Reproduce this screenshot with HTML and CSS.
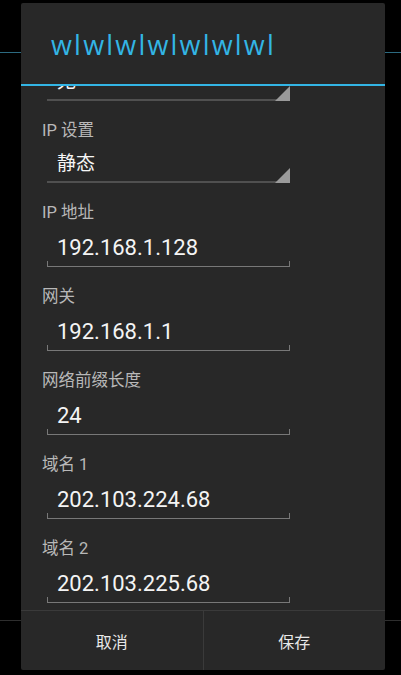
FILE: index.html
```html
<!DOCTYPE html>
<html lang="zh-CN">
<head>
    <meta charset="UTF-8">
    <meta name="viewport" content="width=device-width, initial-scale=1.0">
    <title>WLAN</title>
    <link rel="stylesheet" href="styles.css">
</head>
<body>

    <div class="dialog">
        <div class="dialog-title">wlwlwlwlwlwlwl</div>

        <div class="dialog-body">
            <div class="form">
                <div class="row">
                    <div class="label">代理设置</div>
                    <div class="spinner">无</div>
                </div>
                <div class="row">
                    <div class="label">IP 设置</div>
                    <div class="spinner">静态</div>
                </div>
                <div class="row">
                    <div class="label">IP 地址</div>
                    <div class="edit">192.168.1.128</div>
                </div>
                <div class="row">
                    <div class="label">网关</div>
                    <div class="edit">192.168.1.1</div>
                </div>
                <div class="row">
                    <div class="label">网络前缀长度</div>
                    <div class="edit">24</div>
                </div>
                <div class="row">
                    <div class="label">域名 1</div>
                    <div class="edit">202.103.224.68</div>
                </div>
                <div class="row">
                    <div class="label">域名 2</div>
                    <div class="edit">202.103.225.68</div>
                </div>
            </div>
        </div>

        <div class="dialog-buttons">
            <div class="btn">取消</div>
            <div class="btn">保存</div>
        </div>
    </div>

</body>
</html>
```

FILE: styles.css
```css
* {
    padding: 0;
    margin: 0;
    box-sizing: border-box;
}
body {
    height: 675px;
    overflow: hidden;
    font-family: Roboto, "Noto Sans CJK SC", sans-serif;
    background:
        linear-gradient(#2c6a80, #2c6a80) 0 52px / 100% 1px no-repeat,
        linear-gradient(#2e2e2e, #2e2e2e) 0 620px / 100% 1px no-repeat,
        #000;
}
.dialog {
    width: 364px;
    height: 667px;
    margin: 3px 0 0 21px;
    background: #282828;
    border-radius: 2px;
    display: flex;
    flex-direction: column;
    overflow: hidden;
}
.dialog-title {
    height: 83px;
    padding: 25px 0 0 30px;
    font-family: "Open Sans", Roboto, sans-serif;
    font-size: 27px;
    line-height: 34px;
    letter-spacing: 2.2px;
    white-space: nowrap;
    color: #33b5e5;
    border-bottom: 2px solid #33b5e5;
}
.dialog-body {
    flex: 1;
    overflow: hidden;
}
.form {
    margin-top: -67px;
}
.row {
    padding-top: 20px;
}
.label {
    padding-left: 21px;
    font-size: 16.5px;
    line-height: 20px;
    color: #b8b8b8;
}
.spinner {
    position: relative;
    width: 243px;
    margin-left: 26px;
    padding: 10px 0 4px 10px;
    font-size: 19px;
    line-height: 26px;
    color: #f6f6f6;
    border-bottom: 2px solid #505050;
}
.spinner::after {
    content: '';
    position: absolute;
    right: 0;
    bottom: -2px;
    width: 0;
    height: 0;
    border-left: 15px solid transparent;
    border-bottom: 15px solid #9a9a9a;
}
.edit {
    position: relative;
    width: 243px;
    margin-left: 26px;
    padding: 12px 0 5px 10px;
    font-size: 22px;
    line-height: 26px;
    color: #f4f4f4;
    border-bottom: 1px solid #787878;
}
.edit::after {
    content: '';
    position: absolute;
    left: 0;
    right: 0;
    bottom: 0;
    height: 5px;
    border-left: 1px solid #787878;
    border-right: 1px solid #787878;
}
.dialog-buttons {
    display: flex;
    height: 60px;
    border-top: 1px solid #3a3a3a;
}
.btn {
    flex: 1;
    display: flex;
    align-items: center;
    justify-content: center;
    font-size: 16px;
    color: #e8e8e8;
}
.btn + .btn {
    border-left: 1px solid #3a3a3a;
}
```
